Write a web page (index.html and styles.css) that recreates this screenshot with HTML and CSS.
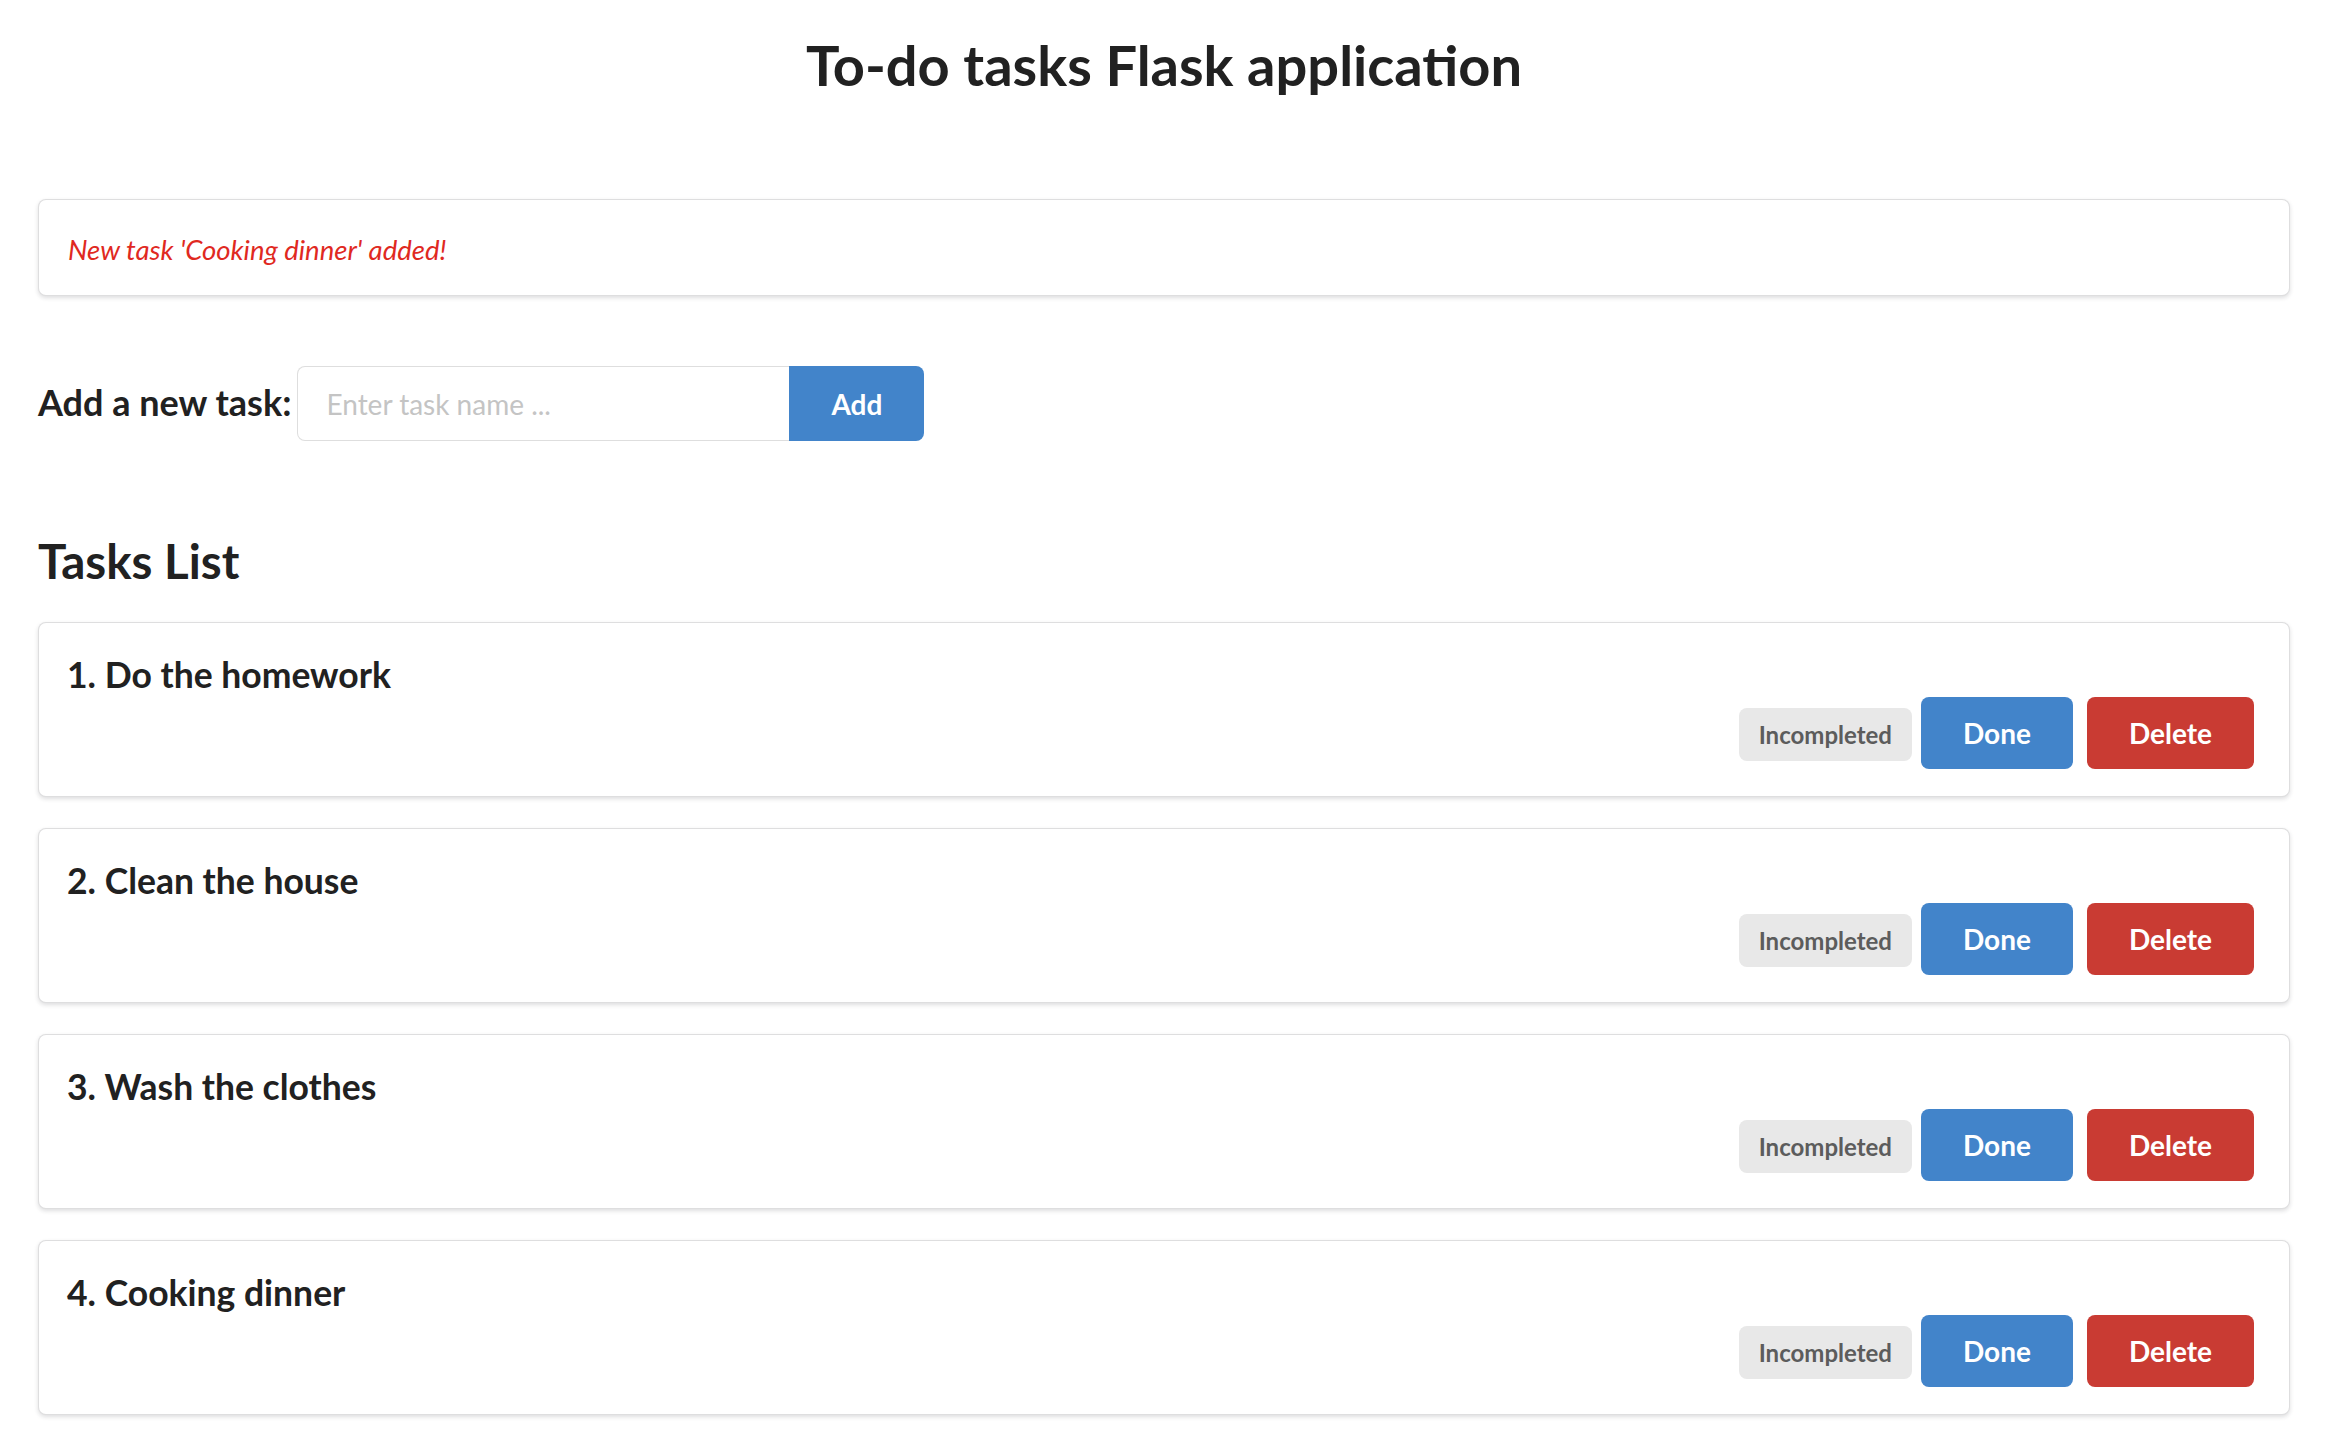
FILE: index.html
```html
<!DOCTYPE html>
<html lang="en">
<head>
<meta charset="utf-8">
<title>To-do tasks Flask application</title>
<link rel="stylesheet" href="styles.css">
</head>
<body>
<div class="page">
  <h1 class="title">To-do tasks Flask application</h1>

  <div class="segment message">
    <p class="flash">New task 'Cooking dinner' added!</p>
  </div>

  <form class="add-form" onsubmit="return false;">
    <label class="add-label" for="task">Add a new task:</label>
    <div class="action-input">
      <input id="task" class="task-input" type="text" placeholder="Enter task name ...">
      <button class="btn btn-blue btn-attached" type="submit">Add</button>
    </div>
  </form>

  <h2 class="list-title">Tasks List</h2>

  <div class="task-list">
    <div class="segment task">
      <p class="task-name">1. Do the homework</p>
      <div class="task-actions">
        <span class="status">Incompleted</span>
        <a class="btn btn-blue">Done</a>
        <a class="btn btn-red">Delete</a>
      </div>
    </div>
    <div class="segment task">
      <p class="task-name">2. Clean the house</p>
      <div class="task-actions">
        <span class="status">Incompleted</span>
        <a class="btn btn-blue">Done</a>
        <a class="btn btn-red">Delete</a>
      </div>
    </div>
    <div class="segment task">
      <p class="task-name">3. Wash the clothes</p>
      <div class="task-actions">
        <span class="status">Incompleted</span>
        <a class="btn btn-blue">Done</a>
        <a class="btn btn-red">Delete</a>
      </div>
    </div>
    <div class="segment task">
      <p class="task-name">4. Cooking dinner</p>
      <div class="task-actions">
        <span class="status">Incompleted</span>
        <a class="btn btn-blue">Done</a>
        <a class="btn btn-red">Delete</a>
      </div>
    </div>
  </div>
</div>
</body>
</html>
```

FILE: styles.css
```css
* { box-sizing: border-box; }

html, body {
  margin: 0;
  background: #ffffff;
}

body {
  font-family: Lato, "Helvetica Neue", Arial, sans-serif;
  color: #212121;
}

.page {
  padding: 36px 44px 40px 38px;
}

.title {
  margin: 0;
  font-size: 56px;
  line-height: 58px;
  font-weight: 700;
  text-align: center;
  color: #212121;
}

.segment {
  background: #fff;
  border: 1px solid rgba(34, 36, 38, 0.15);
  border-radius: 8px;
  box-shadow: 0 2px 4px 0 rgba(34, 36, 38, 0.15);
}

.message {
  margin-top: 105px;
  padding: 30px 28px 26px 29px;
}

.flash {
  margin: 0;
  font-size: 27.5px;
  line-height: 39px;
  font-style: italic;
  color: #e0291f;
}

.add-form {
  margin-top: 70px;
  display: flex;
  align-items: flex-start;
  gap: 6px;
}

.add-label {
  margin-top: 18px;
  font-size: 36px;
  line-height: 36px;
  font-weight: 700;
  color: #212121;
}

.action-input {
  display: flex;
  height: 75px;
}

.task-input {
  width: 492px;
  height: 75px;
  margin: 0;
  padding: 0 28px;
  font-family: Lato, "Helvetica Neue", Arial, sans-serif;
  font-size: 28px;
  color: #212121;
  border: 1px solid rgba(34, 36, 38, 0.15);
  border-right: none;
  border-radius: 8px 0 0 8px;
  outline: none;
  background: #fff;
}

.task-input::placeholder {
  color: #c4c4c4;
}

.btn {
  display: inline-block;
  padding: 22px 42px;
  font-family: Lato, "Helvetica Neue", Arial, sans-serif;
  font-size: 28px;
  line-height: 28px;
  font-weight: 700;
  color: #fff;
  border: none;
  border-radius: 8px;
  cursor: pointer;
  text-decoration: none;
}

.btn-blue { background: #4284ca; }
.btn-red { background: #c93b33; }

.btn-attached {
  height: 75px;
  border-radius: 0 8px 8px 0;
  padding: 0 42px;
}

.list-title {
  margin: 95px 0 0;
  font-size: 47.5px;
  line-height: 50px;
  font-weight: 700;
  color: #212121;
}

.task-list {
  margin-top: 36px;
  display: flex;
  flex-direction: column;
  gap: 31px;
}

.task {
  padding: 29px 28px 27px 28px;
}

.task-name {
  margin: 0;
  font-size: 35.5px;
  line-height: 45px;
  font-weight: 700;
  color: #212121;
}

.task-actions {
  display: flex;
  justify-content: flex-end;
  align-items: baseline;
}

.status {
  display: inline-block;
  padding: 14px 20px;
  margin-right: 9px;
  font-size: 24px;
  line-height: 25px;
  font-weight: 700;
  color: #5c5c5c;
  background: #e8e8e8;
  border-radius: 8px;
}

.task-actions .btn-blue { margin-right: 14px; }
.task-actions .btn-red { margin-right: 7px; }
```
